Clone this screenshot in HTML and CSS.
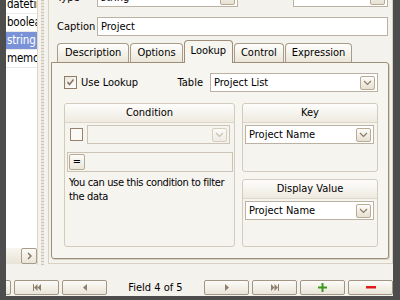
FILE: index.html
```html
<!DOCTYPE html>
<html>
<head>
<meta charset="utf-8">
<link rel="stylesheet" href="styles.css">
</head>
<body>
<div class="frame">
  <div class="main">
    <div class="upper">
      <div class="listcol">
        <div class="list">
          <div class="items">
            <div class="item">datetime</div>
            <div class="item">boolean</div>
            <div class="item sel">string</div>
            <div class="item">memo</div>
          </div>
        </div>
        <div class="hscroll">
          <span class="sbtn"><svg width="5" height="8" viewBox="0 0 5 8"><path d="M1 1 L4 4 L1 7" fill="none" stroke="#7d6d5d" stroke-width="1.3"/></svg></span>
        </div>
      </div>
      <div class="splitter"><div class="dots"></div></div>
      <div class="editor">
        <div class="row first">
          <span class="lbl">Type</span>
          <div class="combo typecombo"><span class="val">string</span><span class="dd"><svg width="9" height="6" viewBox="0 0 9 6"><path d="M1 1 L4.5 4.5 L8 1" fill="none" stroke="#8b7b68" stroke-width="1.2"/></svg></span></div>
          <div class="combo sizecombo"><span class="val"></span><span class="dd"><svg width="9" height="6" viewBox="0 0 9 6"><path d="M1 1 L4.5 4.5 L8 1" fill="none" stroke="#8b7b68" stroke-width="1.2"/></svg></span></div>
        </div>
        <div class="row cap">
          <span class="lbl">Caption</span>
          <div class="input">Project</div>
        </div>
        <div class="tabs">
          <div class="tab wide">Description</div>
          <div class="tab">Options</div>
          <div class="tab active">Lookup</div>
          <div class="tab">Control</div>
          <div class="tab">Expression</div>
        </div>
        <div class="panel">
          <div class="lrow">
            <span class="chk"><svg width="11" height="11" viewBox="0 0 11 11"><path d="M2.5 5 L4.5 7.5 L8.5 2.5" fill="none" stroke="#857462" stroke-width="1.5"/></svg></span>
            <span>Use Lookup</span>
            <span class="tlabel">Table</span>
            <div class="combo tablecombo"><span class="val">Project List</span><span class="dd"><svg width="9" height="6" viewBox="0 0 9 6"><path d="M1 1 L4.5 4.5 L8 1" fill="none" stroke="#8b7b68" stroke-width="1.2"/></svg></span></div>
          </div>
          <div class="groups">
            <div class="grp">
              <div class="gh">Condition</div>
              <div class="crow">
                <span class="chk2"></span>
                <div class="combo disabled"><span class="val"></span><span class="dd"><svg width="9" height="6" viewBox="0 0 9 6"><path d="M1 1 L4.5 4.5 L8 1" fill="none" stroke="#c9c0b2" stroke-width="1.2"/></svg></span></div>
              </div>
              <div class="eqrow"><span class="eqbtn">=</span></div>
              <div class="note">You can use this condition to filter the data</div>
            </div>
            <div class="rcol">
              <div class="grp">
                <div class="gh">Key</div>
                <div class="combo gcombo"><span class="val">Project Name</span><span class="dd"><svg width="9" height="6" viewBox="0 0 9 6"><path d="M1 1 L4.5 4.5 L8 1" fill="none" stroke="#8b7b68" stroke-width="1.2"/></svg></span></div>
              </div>
              <div class="grp">
                <div class="gh">Display Value</div>
                <div class="combo gcombo"><span class="val">Project Name</span><span class="dd"><svg width="9" height="6" viewBox="0 0 9 6"><path d="M1 1 L4.5 4.5 L8 1" fill="none" stroke="#8b7b68" stroke-width="1.2"/></svg></span></div>
              </div>
            </div>
          </div>
        </div>
      </div>
    </div>
    <div class="nav">
      <span class="nbtn"></span>
      <span class="nbtn"><svg width="8" height="7" viewBox="0 0 8 7"><rect x="0" y="0" width="1" height="7" fill="#8e7f6f"/><path d="M4.5 0 L1 3.5 L4.5 7 Z M8 0 L4.5 3.5 L8 7 Z" fill="#8e7f6f"/></svg></span>
      <span class="nbtn"><svg width="4" height="7" viewBox="0 0 4 7"><path d="M4 0 L0 3.5 L4 7 Z" fill="#8e7f6f"/></svg></span>
      <span class="nlabel">Field 4 of 5</span>
      <span class="nbtn"><svg width="4" height="7" viewBox="0 0 4 7"><path d="M0 0 L4 3.5 L0 7 Z" fill="#8e7f6f"/></svg></span>
      <span class="nbtn"><svg width="8" height="7" viewBox="0 0 8 7"><path d="M0 0 L3.5 3.5 L0 7 Z M3.5 0 L7 3.5 L3.5 7 Z" fill="#8e7f6f"/><rect x="7" y="0" width="1" height="7" fill="#8e7f6f"/></svg></span>
      <span class="nbtn"><svg width="9" height="9" viewBox="0 0 9 9"><path d="M3.5 0 H5.5 V3.5 H9 V5.5 H5.5 V9 H3.5 V5.5 H0 V3.5 H3.5 Z" fill="#3a9a1c"/></svg></span>
      <span class="nbtn"><svg width="10" height="3" viewBox="0 0 10 3"><rect x="0" y="0" width="10" height="2.5" fill="#e01b1b"/></svg></span>
    </div>
  </div>
</div>
</body>
</html>
```
FILE: styles.css
```css
* { box-sizing: border-box; }
html, body { margin: 0; padding: 0; }
body {
  width: 400px;
  height: 300px;
  overflow: hidden;
  background: #4d4d4d;
  font: 11px "DejaVu Sans Condensed", "DejaVu Sans", sans-serif;
  color: #000;
}
.frame { height: 300px; padding: 0 7px 4px 6px; }
.main {
  height: 296px;
  background: #f4f2ec;
  display: flex;
  flex-direction: column;
}
.upper { display: flex; height: 278px; align-items: flex-start; }

/* field list */
.listcol { width: 31px; flex-shrink: 0; }
.list { height: 248px; background: #fff; overflow: hidden; }
.items { margin-top: -4px; }
.item {
  height: 18px;
  line-height: 17px;
  border-bottom: 1px solid #ebe9e3;
  padding-left: 1px;
  white-space: nowrap;
  overflow: hidden;
  font-size: 11.5px;
  letter-spacing: -0.2px;
}
.item.sel { background: #7a93d8; color: #fff; }
.hscroll {
  height: 16px;
  background: linear-gradient(#f8f6f1, #e8e3d7);
  display: flex;
  justify-content: flex-end;
}
.sbtn {
  width: 16px;
  height: 16px;
  border: 1px solid #a99b88;
  border-radius: 2px;
  background: linear-gradient(#fcfbf8, #e9e4d8);
  display: flex;
  align-items: center;
  justify-content: center;
}

/* splitter */
.splitter {
  width: 11px;
  height: 265px;
  flex-shrink: 0;
  border-left: 1px solid #dcd6ca;
  padding-left: 3px;
}
.dots {
  width: 3px;
  height: 100%;
  background: repeating-linear-gradient(#cbc3b3 0 1px, #ebe7de 1px 3px);
}

/* editor */
.editor {
  width: 345px;
  flex-shrink: 0;
  border: 1px solid #d7d0c3;
  border-top: 0;
  padding: 0 3px 4px 0;
}
.row { display: flex; align-items: center; height: 19px; padding-left: 8px; }
.row.first { margin-top: -12px; }
.row.cap { margin-top: 10px; }
.lbl { width: 40px; flex-shrink: 0; }
.input {
  flex: 1;
  height: 19px;
  margin-right: 1px;
  border: 1px solid #bbb2a4;
  background: #fff;
  padding-left: 3px;
  line-height: 17px;
}
.combo {
  display: flex;
  align-items: center;
  height: 19px;
  border: 1px solid #bbb2a4;
  background: #fff;
  padding: 1px 2px 1px 1px;
}
.combo .val { flex: 1; padding-left: 2px; white-space: nowrap; overflow: hidden; }
.dd {
  width: 15px;
  height: 14px;
  border: 1px solid #b9aa95;
  border-radius: 2px;
  background: linear-gradient(#fdfcfa, #e7e0d0);
  display: flex;
  align-items: center;
  justify-content: center;
}
.typecombo { width: 141px; }
.sizecombo { width: 95px; margin-left: auto; margin-right: 1px; }

/* tabs */
.tabs {
  display: flex;
  align-items: flex-end;
  height: 22px;
  margin-top: 4px;
  padding-left: 8px;
}
.tab {
  height: 19px;
  padding: 0 6px;
  border: 1px solid #aa9c87;
  border-bottom: 0;
  border-radius: 4px 4px 0 0;
  background: linear-gradient(#fefefd, #ebe6d8);
  line-height: 18px;
  margin-right: 1px;
  white-space: nowrap;
}
.tab.wide { padding: 0 7px; }
.tab.active {
  height: 23px;
  margin: 0 1px -1px 0;
  padding: 0 6px;
  background: #f7f5f0;
  border-color: #9d8e79;
  position: relative;
  z-index: 1;
  line-height: 20px;
}
.panel {
  margin-left: 2px;
  width: 338px;
  height: 197px;
  border: 1px solid #9d8e79;
  border-radius: 0 3px 3px 3px;
  background: #f7f5f0;
  padding: 10px 10px 11px 12px;
  box-shadow: 1px 1px 0 #d8d0c3;
}
.lrow { display: flex; align-items: center; height: 19px; }
.chk {
  width: 13px;
  height: 13px;
  border: 1px solid #8e7c69;
  background: linear-gradient(135deg, #e9e5db, #fff);
  margin-right: 4px;
  display: flex;
}
.tlabel { margin-left: auto; margin-right: 7px; }
.tablecombo { width: 168px; }

/* groups */
.groups {
  display: grid;
  grid-template-columns: 171px 136px;
  gap: 7px;
  margin-top: 11px;
  height: 144px;
}
.grp {
  border: 1px solid #d3cbbd;
  border-radius: 3px;
  background: #f6f4ef;
}
.gh {
  height: 19px;
  border-bottom: 1px solid #ddd6c9;
  border-radius: 3px 3px 0 0;
  background: linear-gradient(#fdfdfb, #eeeae0);
  text-align: center;
  line-height: 18px;
}
.rcol { display: grid; grid-template-rows: 69px 1fr; gap: 7px; }
.crow { display: flex; align-items: center; margin: 2px 4px 0 5px; }
.chk2 {
  width: 13px;
  height: 13px;
  border: 1px solid #98826d;
  background: #fbfaf7;
  margin-right: 4px;
  flex-shrink: 0;
}
.combo.disabled { flex: 1; background: #f5f4ef; border-color: #cbc4b7; }
.combo.disabled .dd { border-color: #d6cec1; background: linear-gradient(#fbfaf7, #efebe3); }
.eqrow {
  height: 20px;
  margin: 8px 1px 0 2px;
  border: 1px solid #cbc3b5;
  padding: 0 1px;
  display: flex;
  align-items: center;
}
.eqbtn {
  width: 16px;
  height: 16px;
  border: 1px solid #b6aa96;
  border-radius: 2px;
  background: linear-gradient(#fdfcfa, #ebe6da);
  text-align: center;
  line-height: 14px;
}
.note { margin: 4px 0 0 4px; line-height: 14px; letter-spacing: -0.35px; }
.gcombo { margin: 2px 3px 0 2px; }

/* navigator */
.nav {
  height: 18px;
  padding-top: 2px;
  display: flex;
  justify-content: flex-end;
  align-items: flex-start;
  gap: 3px;
  overflow: hidden;
}
.nbtn {
  width: 45px;
  height: 15px;
  flex-shrink: 0;
  border: 1px solid #a39584;
  border-radius: 2px;
  background: linear-gradient(#fcfbf8, #eae5d9);
  display: flex;
  align-items: center;
  justify-content: center;
}
.nlabel {
  width: 91px;
  flex-shrink: 0;
  text-align: center;
  line-height: 15px;
}
```
